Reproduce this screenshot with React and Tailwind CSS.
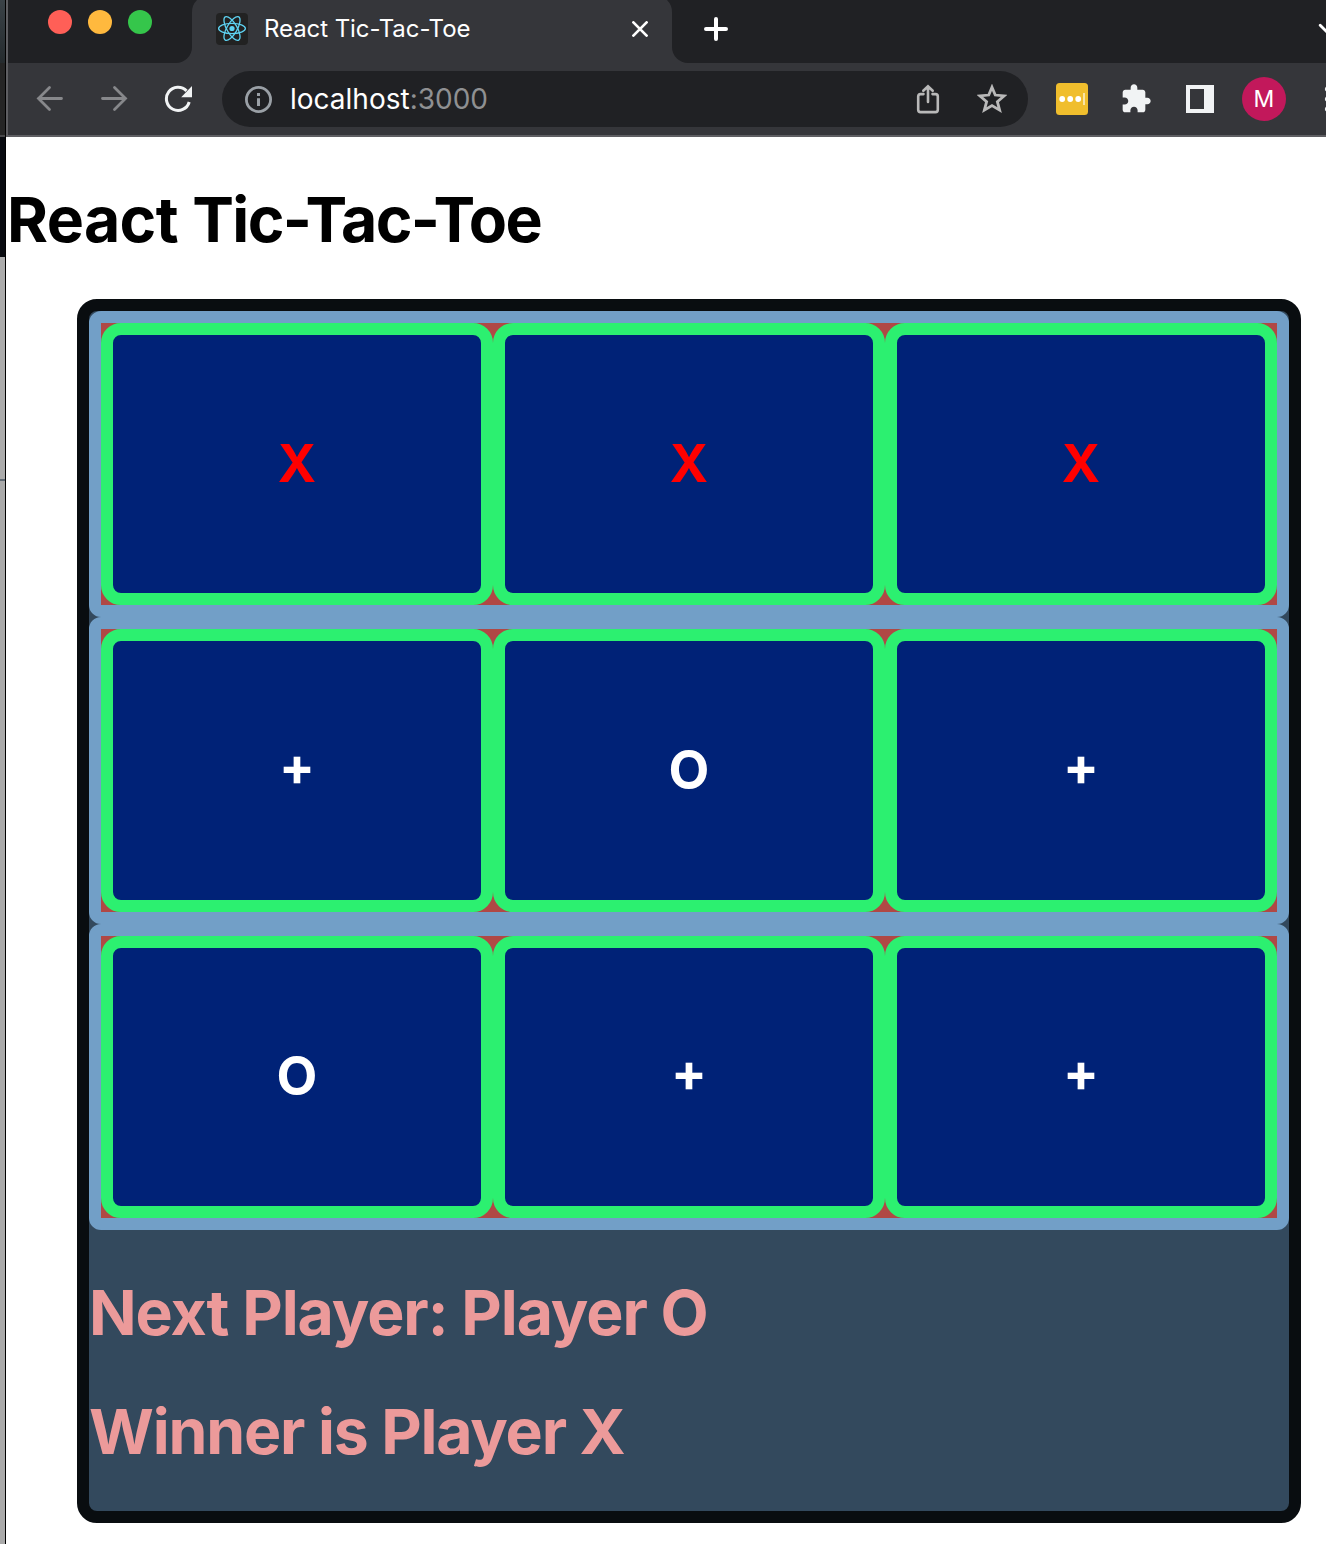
import React from "react";

const rows = [
  { h: "h-[306px]", cells: ["X", "X", "X"] },
  { h: "h-[307px]", cells: ["+", "O", "+"] },
  { h: "h-[306px]", cells: ["O", "+", "+"] },
];

function DesktopEdge() {
  return (
    <div className="flex h-[1544px] w-[6px] shrink-0 flex-col border-r border-black">
      <div className="h-[63px] bg-linear-to-b from-[#3a4247] to-[#252b2e]" />
      <div className="h-[72px] bg-[#252525]" />
      <div className="h-[2px] bg-[#48484a]" />
      <div className="h-[120px] bg-[#090b10]" />
      <div className="h-[222px] bg-[#acacac]" />
      <div className="h-[2px] bg-[#606a74]" />
      <div className="grow bg-[#aaaaaa]" />
    </div>
  );
}

function ReactIcon() {
  return (
    <svg className="ml-6 size-8 shrink-0" viewBox="0 0 32 32">
      <rect width="32" height="32" rx="4" fill="#222222" />
      <g fill="none" stroke="#5ed3f3" strokeWidth="1.3">
        <ellipse cx="16" cy="15.5" rx="13.4" ry="5.1" />
        <ellipse cx="16" cy="15.5" rx="13.4" ry="5.1" transform="rotate(60 16 15.5)" />
        <ellipse cx="16" cy="15.5" rx="13.4" ry="5.1" transform="rotate(120 16 15.5)" />
      </g>
      <circle cx="16" cy="15.5" r="2.6" fill="#5ed3f3" />
    </svg>
  );
}

function TabStrip() {
  return (
    <div className="flex h-[63px]">
      <div className="relative flex w-[184px] shrink-0 gap-4 rounded-br-[16px] bg-[#202124] pt-[10px] pl-10">
        <span className="size-6 rounded-full bg-[#ff5f57]" />
        <span className="size-6 rounded-full bg-[#ffb93e]" />
        <span className="size-6 rounded-full bg-[#35c64b]" />
        <svg className="absolute top-0 -right-[5px]" width="5" height="12">
          <path d="M0 0H5Q0 5 0 12Z" fill="#202124" />
        </svg>
      </div>
      <div className="flex h-[58px] w-[480px] shrink-0 items-center">
        <ReactIcon />
        <span className="ml-4 text-[24px] leading-8 tracking-[-0.07px] whitespace-nowrap text-white">React Tic-Tac-Toe</span>
        <svg className="mr-6 ml-auto" width="16" height="16" viewBox="0 0 16 16" stroke="#fff" strokeWidth="2.7" strokeLinecap="round">
          <path d="M1.4 1.4 14.6 14.6M14.6 1.4 1.4 14.6" />
        </svg>
      </div>
      <div className="relative flex grow justify-between rounded-bl-[16px] bg-[#202124] pl-8">
        <svg className="absolute top-0 -left-[5px]" width="5" height="12">
          <path d="M5 0H0Q5 5 5 12Z" fill="#202124" />
        </svg>
        <svg className="mt-[17px]" width="24" height="24" stroke="#fff" strokeWidth="4" strokeLinecap="round">
          <path d="M12 2V22M2 12H22" />
        </svg>
        <svg className="mt-[22px]" width="8" height="14" stroke="#fff" strokeWidth="2.8" strokeLinecap="round">
          <path d="M2.2 3.2 12 13" />
        </svg>
      </div>
    </div>
  );
}

function Toolbar() {
  return (
    <div className="flex h-[74px] items-center border-b-2 border-[#5e5e62] bg-[#35363a]">
      <svg className="ml-7 shrink-0" width="28" height="28" fill="none" stroke="#87888b" strokeWidth="2.8" strokeLinecap="round">
        <path d="M25.5 13.5H2.5M13.5 2.5 2.5 13.5 13.5 24.5" />
      </svg>
      <svg className="ml-9 shrink-0" width="28" height="28" fill="none" stroke="#87888b" strokeWidth="2.8" strokeLinecap="round">
        <path d="M2.5 13.5H25.5M14.5 2.5 25.5 13.5 14.5 24.5" />
      </svg>
      <svg className="ml-9 shrink-0" width="30" height="28">
        <path d="M25.2 17A11.6 11.6 0 1 1 22.5 5.9" fill="none" stroke="#f1f3f4" strokeWidth="3" />
        <path d="M28 1V12.2H17.2Z" fill="#f1f3f4" />
      </svg>
      <div className="ml-7 flex h-14 w-[806px] shrink-0 items-center rounded-full bg-[#202124] pl-[23px]">
        <svg className="shrink-0" width="27" height="27" fill="none" stroke="#9aa0a6">
          <circle cx="13.5" cy="13.5" r="12.1" strokeWidth="2.8" />
          <path d="M13.5 12.3V20M13.5 7V10" strokeWidth="3" />
        </svg>
        <div className="ml-[18px] text-[28px] leading-8 text-white">
          localhost<span className="text-[#8f9092]">:3000</span>
        </div>
        <svg className="ml-auto" width="24" height="30" fill="none" stroke="#b9b9b9" strokeWidth="2.6" strokeLinecap="round">
          <path d="M7.5 10.1H4.5Q2.2 10.1 2.2 12.5V25.8Q2.2 28.1 4.5 28.1H19.5Q21.8 28.1 21.8 25.8V12.5Q21.8 10.1 19.5 10.1H16.5M12 18V2.5M7.3 6.8 12 2.3 16.7 6.8" />
        </svg>
        <svg className="mr-[21px] ml-[37px]" width="30" height="30" fill="none" stroke="#b9b9b9" strokeWidth="2.5">
          <path d="M15 4 17.9 11 25.9 11.7 19.8 16.9 21.8 24.5 15 20.4 8.2 24.5 10.2 16.9 4.1 11.7 12.1 11Z" transform="translate(-1.8 -1.3) scale(1.12)" />
        </svg>
      </div>
      <svg className="ml-7 shrink-0" width="32" height="32">
        <rect width="32" height="32" rx="3.5" fill="#f0be2d" />
        <g fill="#fff">
          <circle cx="6.2" cy="16" r="2.9" />
          <circle cx="14.2" cy="16" r="2.9" />
          <circle cx="22.2" cy="16" r="2.9" />
        </g>
        <path d="M28 10V22" stroke="#f9e4a5" strokeWidth="2" />
      </svg>
      <svg className="ml-8 shrink-0" width="32" height="32" viewBox="0 0 24 24" fill="#f1f3f4">
        <path d="M20.5 11H19V7c0-1.1-.9-2-2-2h-4V3.5C13 2.12 11.88 1 10.5 1S8 2.12 8 3.5V5H4c-1.1 0-1.990.9-1.990 2v3.800H3.500c1.490 0 2.700 1.210 2.700 2.700s-1.210 2.700-2.700 2.700H2V20c0 1.100.9 2 2 2h3.800v-1.500c0-1.490 1.210-2.700 2.700-2.700 1.490 0 2.700 1.210 2.700 2.700V22H17c1.100 0 2-.9 2-2v-4h1.500c1.380 0 2.500-1.120 2.500-2.500S21.880 11 20.500 11z" />
      </svg>
      <svg className="ml-[34px] shrink-0" width="28" height="28">
        <path d="M0 0H28V28H0ZM4 4V24H18V4Z" fill="#f1f3f4" fillRule="evenodd" />
      </svg>
      <div className="ml-7 flex size-11 shrink-0 items-center justify-center rounded-full bg-[#c2185b] pt-px text-[23px] leading-none text-white">M</div>
      <svg className="ml-[38px] shrink-0" width="2" height="28" fill="#f1f3f4">
        <circle cx="3.6" cy="4" r="2.7" />
        <circle cx="3.6" cy="14" r="2.7" />
        <circle cx="3.6" cy="24" r="2.7" />
      </svg>
    </div>
  );
}

const tones = {
  X: "pb-px text-[52px] text-[#ff0000]",
  O: "pb-px text-[53px] text-white",
  "+": "pb-[9px] text-[53px] text-white",
};

function Square({ value }) {
  return (
    <button
      className={
        "flex grow basis-0 items-center justify-center rounded-[20px] border-[12px] border-[#2cf070] bg-[#002277] leading-none font-bold " +
        tones[value]
      }
    >
      {value}
    </button>
  );
}

export default function App() {
  return (
    <div className="flex h-[1544px] w-[1326px] overflow-hidden bg-white font-['Inter',sans-serif]">
      <DesktopEdge />
      <div className="flex w-[1320px] flex-col">
        <div className="flex h-[137px] flex-col overflow-hidden border-l-2 border-[#5e5e62] bg-[#35363a]">
          <TabStrip />
          <Toolbar />
        </div>
        <h1 className="mt-[43px] h-[79px] pl-px text-[62.5px] leading-[78px] font-bold tracking-[-1.65px] whitespace-nowrap text-black">
          <span className="tracking-[-0.6px]">React </span>Tic-Tac-Toe
        </h1>
        <div className="mt-10 ml-[71px] h-[1224px] w-[1224px] rounded-[20px] border-[12px] border-[#090d10] bg-[#33495d]">
          {rows.map((row, i) => (
            <div key={i} className={"flex rounded-[12px] border-[12px] border-[#729fc7] bg-[#b04845] " + row.h}>
              {row.cells.map((value, j) => (
                <Square key={j} value={value} />
              ))}
            </div>
          ))}
          <h2 className="mt-[43px] h-[78px] text-[62.5px] leading-[78px] font-bold tracking-[-1.05px] whitespace-nowrap text-[#ec9a9a]">
            Next Player: Player O
          </h2>
          <h2 className="mt-[41px] h-[78px] text-[62.5px] leading-[78px] font-bold tracking-[-1.17px] whitespace-nowrap text-[#ec9a9a]">
            Winner is Player X
          </h2>
        </div>
      </div>
    </div>
  );
}
